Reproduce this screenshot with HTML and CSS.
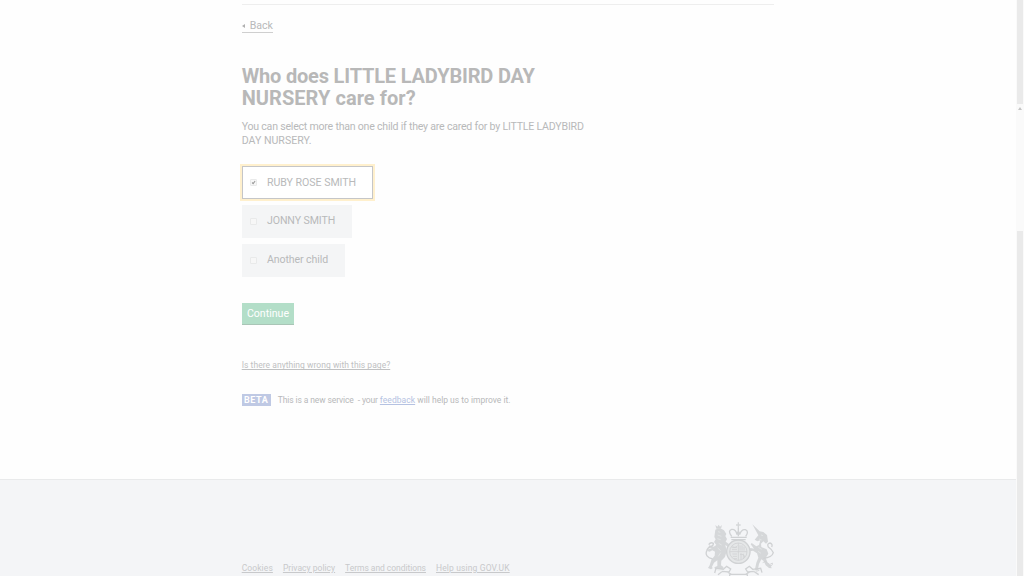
FILE: index.html
```html
<!DOCTYPE html>
<html lang="en">
<head>
<meta charset="utf-8">
<title>Who does LITTLE LADYBIRD DAY NURSERY care for?</title>
<link rel="stylesheet" href="styles.css">
</head>
<body>
<div class="page">
<div class="view">
  <main class="content">
    <a class="back"><span class="arrow"></span><span class="back-text">Back</span></a>
    <h1><span class="h-a">Who does LITTLE LADYBIRD DAY</span><br><span class="h-b">NURSERY care for?</span></h1>
    <p class="hint"><span class="hint-a">You can select more than one child if they are cared for by <span class="hint-name">LITTLE LADYBIRD</span></span><br><span class="hint-b">DAY NURSERY.</span></p>
    <div class="choices">
      <label class="choice selected"><span class="box"><svg viewBox="0 0 7 7"><path d="M1.5 3.5 3 5 5.8 1.4"/></svg></span><span class="c-a">RUBY ROSE SMITH</span></label>
      <label class="choice second"><span class="box"></span><span class="c-b">JONNY SMITH</span></label>
      <label class="choice third"><span class="box"></span><span class="c-c">Another child</span></label>
    </div>
    <button class="continue">Continue</button>
    <a class="report"><span>Is there anything wrong with this page?</span></a>
    <div class="phase"><strong class="beta">BETA</strong><span class="phase-text"><span class="phase-lead">This is a new service &nbsp;- your </span><a>feedback</a> will help us to improve it.</span></div>
  </main>
  <footer class="footer">
    <div class="footer-inner">
      <nav class="links"><a class="l-a">Cookies</a><a class="l-b">Privacy policy</a><a class="l-c">Terms and conditions</a><a class="l-d">Help using GOV.UK</a></nav>
      <svg class="crest" viewBox="45 30 210 168">
        <g class="fill">
          <path d="M143 34h4v6h5v4h-5v7h-4v-7h-5v-4h5z"/>
          <path d="M76 42l6 5 4-6 4 6 6-5-3 11H79z"/>
          <path d="M76 56q14-8 26 2l7 11-3 6 5 9-4 8 11 8 5 8-9 0-8-6 4 18-5 18-11 11-1 14 8 6-3 5H75l-2-5 9-4v-17l-10 7-6 12 2 5-5 3-9-4 5-8 5-16 10-13 1-12-8-4-8 4-7-2 3-5 10-3-9-5 2-4 13 4 8-5-7-9 5-8-4-7z"/>
          <path d="M187 40l22 21 11 2 11 9 3 20-6 6-8-7-7 7 1 10 16 7 5 13-8 13 6 14 10 10 2 7-8-1-10-8-6-13-7-5-7 14-3 15 5 5-10 3-4-7 4-20 6-15-4-13-12-8-9 2-5-5 7-5 10 2-10-13 3-4 14 10 8-4 4-14-9 3-8-5 11-13z"/>
        </g>
        <circle class="shield" cx="145" cy="122" r="36"/>
        <g class="line">
          <path d="M68 144Q43 137 50 120q2-10 13-14 8-2 7-9-8-5-14 4M220 142q26-2 30-17-3-9-15-17-5-10 5-12 9 3 5 12"/>
          <path d="M125 76q-13-17 0-21 13-1 16 16 4-20 8 0 5-17 17-15 12 5 1 20M122 79h48M124 86h43M145 51v25"/>
          <circle cx="145" cy="122" r="35"/>
          <path d="M74 186l4-14 22 3 10-9 12 8-5 9-20-2-13 10M216 185l-4-13-24 3-10-9-11 8 6 9 19-2 14 10M112 183l12 7h43l12-7M119 190v8M172 190v8M130 197h29"/>
        </g>
        <g class="fine">
          <circle cx="145" cy="122" r="26"/>
          <path d="M145 96v52M119 122h52M126 104q9 10 16 0M125 110h16M126 116h15M150 103v16M156 103v16M162 107v12M127 129h14M128 136h13M132 143h9M150 130q14-2 14 10M153 127v18M160 128v15"/>
          <path d="M218 155q9-8 14 1 8 9 15 0 2 10-9 7"/>
        </g>
        <g class="detail"><path d="M84 62l7 2M83 72l11 4M82 83l10 3M86 97l9 5M83 111l9 8M92 125l-7 11M213 72l6 2M207 84l8 3M205 109l10 6M204 121l9 6M82 178l14 2M191 180l14-2"/></g>
      </svg>
    </div>
  </footer>
</div>
<aside class="scrollbar"><div class="thumb-top"></div><div class="track"><i></i></div><div class="thumb-bottom"></div></aside>
</div>
</body>
</html>
```
FILE: styles.css
```css
* { box-sizing: border-box; }
body { margin: 0; background: #fefefe; color: #b8b9ba; font-family: Roboto, "Liberation Sans", sans-serif; font-size: 10.6px; line-height: 14px; overflow: hidden; }
.page { display: flex; width: 1024px; height: 576px; overflow: hidden; }
.view { width: 1016px; height: 576px; display: flex; flex-direction: column; }
.content { width: 532.4px; height: 479px; margin-left: 241.7px; padding-top: 19px; display: flex; flex-direction: column; align-items: flex-start; background: linear-gradient(#eee, #eee) 0 4px / 100% 1px no-repeat; flex: none; }
.content span, .footer a { white-space: nowrap; }
.back { display: flex; align-items: center; width: 31px; height: 14px; border-bottom: 1px solid #cfcfcf; }
.back-text { letter-spacing: -.05px; }
.arrow { border: 2.5px solid transparent; border-right: 3px solid #b0b0b0; border-left: 0; margin-right: 5px; }
h1 { margin: 32px 0 0; font-size: 20px; line-height: 22px; font-weight: 700; color: #b8b8b8; }
.h-a { letter-spacing: -.18px; }
.h-b { letter-spacing: .05px; }
.hint { margin: 11px 0 0; line-height: 14px; }
.hint-a { letter-spacing: -.23px; }
.hint-name { letter-spacing: -.2px; }
.choices { margin-top: 18px; display: flex; flex-direction: column; align-items: flex-start; gap: 5.5px; }
.choice { height: 33.3px; display: flex; align-items: center; padding-left: 8.7px; background: #f4f5f6; }
.selected { width: 131.6px; background: #fff; border: 1px solid #c5c6c8; padding-left: 7.7px; box-shadow: 0 0 0 2px #fff0cd; }
.second { width: 110.2px; }
.third { width: 103.6px; }
.c-a { letter-spacing: -.03px; }
.c-b, .c-c { letter-spacing: -.1px; }
.box { width: 7px; height: 7px; margin-right: 9.6px; border: 1px solid #e9eaea; border-radius: 1px; background: #f7f7f7; display: flex; flex: none; }
.box svg { width: 5px; height: 5px; fill: none; stroke: #999; stroke-width: 1.5; }
.continue { width: 52.6px; height: 22px; margin: 26px 0 0; padding: 1px 0 0; border: 0; border-bottom: 1px solid #a9c5b6; background: #b3dec8; color: #fff; font: inherit; }
.report { margin-top: 33.5px; font-size: 8.5px; letter-spacing: .04px; color: #c0c1c2; text-decoration: underline; }
.phase { display: flex; align-items: center; height: 12px; margin-top: 22px; font-size: 8.5px; }
.phase-lead { letter-spacing: -.11px; }
.beta { width: 29px; height: 12px; line-height: 12px; text-align: center; background: #bfc9e4; color: #fff; margin-right: 7px; font-size: 9px; letter-spacing: .55px; }
.phase a { color: #b5c2e2; text-decoration: underline; letter-spacing: .06px; }
.footer { flex: 1; background: #f4f5f7; border-top: 1px solid #e9eaeb; overflow: hidden; }
.footer-inner { margin-left: 241.7px; width: 533px; display: flex; justify-content: space-between; padding-top: 41px; }
.links { display: flex; gap: 10px; margin-top: 39.7px; font-size: 8.5px; color: #c8c9cb; text-decoration: underline; }
.l-a { letter-spacing: .1px; }
.l-b { letter-spacing: .03px; }
.l-c { letter-spacing: -.05px; }
.l-d { letter-spacing: .14px; }
.crest { width: 70px; height: 56px; }
.fill { fill: #d5d7d9; }
.shield { fill: #e5e7e8; }
.line { fill: none; stroke: #d0d2d4; stroke-width: 4; }
.fine { fill: none; stroke: #cfd1d3; stroke-width: 2.4; }
.detail { stroke: #e9ebec; stroke-width: 2; }
.scrollbar { width: 8px; height: 576px; background: #fafafa; padding: 0 1px; }
.thumb-top { height: 104px; background: #eaeaea; }
.track { height: 127px; padding: 3px 1px; }
.track i { display: block; width: 0; border: 2px solid transparent; border-bottom: 3px solid #c4c4c4; border-top: 0; }
.thumb-bottom { height: 345px; background: #eaeaea; }
```
